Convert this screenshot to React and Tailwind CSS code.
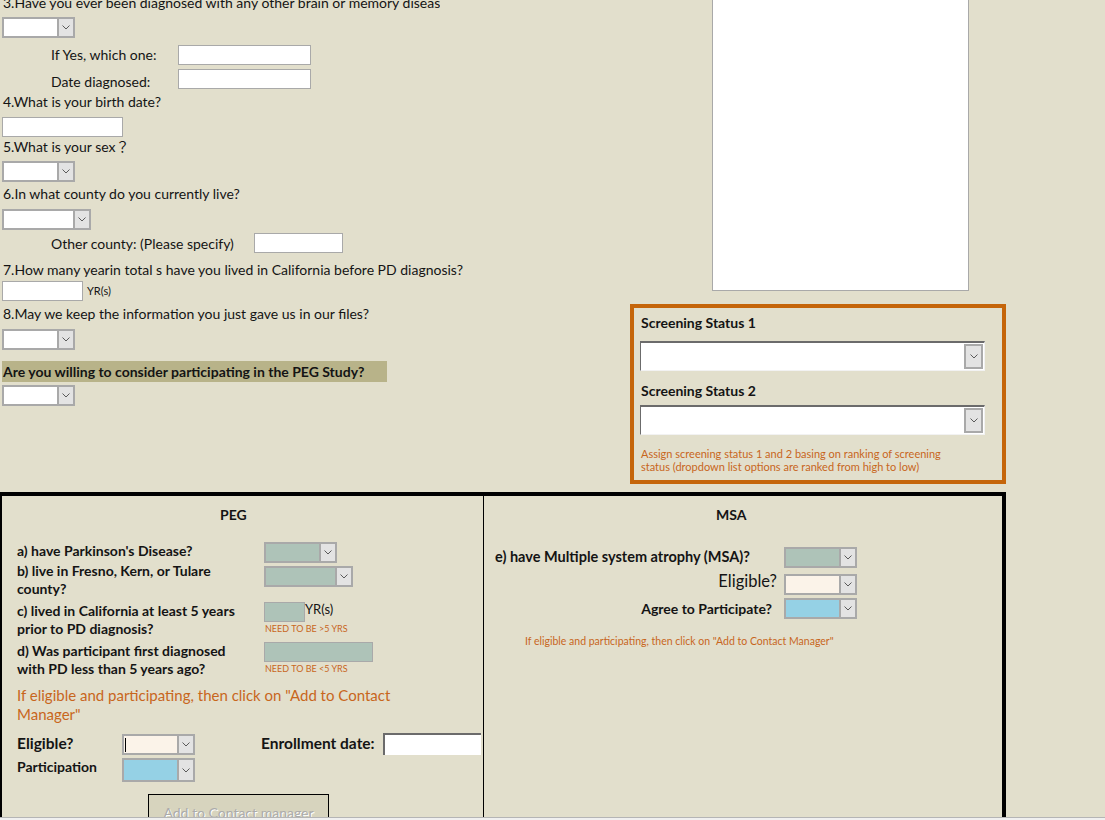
import React from "react";

const Chevron = () => (
  <svg width="8" height="5" viewBox="0 0 8 5" className="block">
    <polyline points="0.5,0.5 4,4 7.5,0.5" fill="none" stroke="#5a5a5a" strokeWidth="1" />
  </svg>
);

// small access-style combo box
const Combo = ({ className = "", bg = "bg-white", cursor = false }) => (
  <div className={`flex border-2 border-[#a9a9a9] ${className}`}>
    <div className={`flex-1 ${bg} relative`}>
      {cursor && <div className="absolute left-[1px] top-[2px] h-[14px] w-[1px] bg-black" />}
    </div>
    <div className="w-[16px] bg-[#e3e3e3] border-l-2 border-[#a9a9a9] flex items-center justify-center">
      <Chevron />
    </div>
  </div>
);

const BigCombo = () => (
  <div className="flex h-[30px] w-[345px] bg-white border-t-2 border-l border-[#6b6b6b] border-b border-r border-b-[#f2f2f2] border-r-[#f2f2f2]">
    <div className="flex-1" />
    <div className="w-[19px] my-[1px] mr-[1px] bg-[#e3e3e3] border-2 border-[#a9a9a9] flex items-center justify-center">
      <Chevron />
    </div>
  </div>
);

const TextBox = ({ className = "", bg = "bg-white" }) => (
  <div className={`${bg} border border-[#a9a9a9] ${className}`} />
);

export default function App() {
  return (
    <div className="h-[820px] w-[1105px] overflow-hidden bg-[#e2dfcc] font-['Lato','Noto_Sans_CJK_JP',sans-serif] text-[14px] text-[#141414] relative">
      <div className="flex">
        {/* questions */}
        <div className="w-[630px] shrink-0 pl-[2px]">
          <div className="-mt-[5px] h-[16px] leading-[16px] w-[438px] overflow-hidden whitespace-nowrap pl-[1px]">
            3.Have you ever been diagnosed with any other brain or memory disease?
          </div>
          <Combo className="mt-[6px] h-[21px] w-[73px]" />
          <div className="mt-[7px] flex items-center h-[20px]">
            <span className="w-[176px] pl-[49px] -mt-[1px]">If Yes, which one:</span>
            <TextBox className="h-[20px] w-[133px]" />
          </div>
          <div className="mt-[4px] flex items-start h-[20px]">
            <span className="w-[176px] pl-[49px] leading-[16px] pt-[5px]">Date diagnosed:</span>
            <TextBox className="h-[20px] w-[133px]" />
          </div>
          <div className="mt-[5px] h-[16px] leading-[16px] pl-[1px]">4.What is your birth date?</div>
          <TextBox className="mt-[7px] h-[20px] w-[121px]" />
          <div className="mt-[1px] h-[16px] leading-[16px] pl-[1px] whitespace-nowrap">
            5.What is your sex<span className="font-['Noto_Sans_CJK_JP',sans-serif] text-[14px] leading-[16px]">？</span>
          </div>
          <Combo className="mt-[7px] h-[21px] w-[73px]" />
          <div className="mt-[4px] h-[16px] leading-[16px] pl-[1px]">6.In what county do you currently live?</div>
          <Combo className="mt-[7px] h-[21px] w-[89px]" />
          <div className="mt-[3px] flex items-center h-[20px]">
            <span className="w-[252px] pl-[49px]">Other county: (Please specify)</span>
            <TextBox className="h-[20px] w-[89px]" />
          </div>
          <div className="mt-[9px] h-[16px] leading-[16px] pl-[1px]">
            7.How many yearin total s have you lived in California before PD diagnosis?
          </div>
          <div className="mt-[3px] flex items-center h-[20px]">
            <TextBox className="h-[20px] w-[81px]" />
            <span className="ml-[4px] text-[11px]">YR(s)</span>
          </div>
          <div className="mt-[5px] h-[16px] leading-[16px] pl-[1px]">
            8.May we keep the information you just gave us in our files?
          </div>
          <Combo className="mt-[7px] h-[21px] w-[73px]" />
          <div className="mt-[11px] h-[21px] w-[385px] bg-[#b8b389] font-bold leading-[21px] pl-[1px]">
            Are you willing to consider participating in the PEG Study?
          </div>
          <Combo className="mt-[3px] h-[21px] w-[73px]" />
        </div>

        {/* right column */}
        <div className="flex-1">
          <div className="ml-[82px] h-[291px] w-[257px] bg-white border-x border-b border-[#a9a9a9]" />
          <div className="mt-[13px] h-[180px] w-[376px] border-4 border-[#c5650a] pl-[6px] pt-[7px]">
            <div className="font-bold h-[16px] leading-[16px] pl-[1px]">Screening Status 1</div>
            <div className="mt-[10px]">
              <BigCombo />
            </div>
            <div className="mt-[12px] font-bold h-[16px] leading-[16px] pl-[1px]">Screening Status 2</div>
            <div className="mt-[6px]">
              <BigCombo />
            </div>
            <div className="mt-[12px] pl-[1px] text-[11px] leading-[13px] text-[#c8661c] w-[320px]">
              Assign screening status 1 and 2 basing on ranking of screening status (dropdown list options are ranked from high to low)
            </div>
          </div>
        </div>
      </div>

      {/* PEG / MSA */}
      <div className="mt-[8px] flex h-[325px] w-[1006px] border-t-4 border-l-2 border-r-4 border-black overflow-hidden">
        <div className="w-[482px] shrink-0 border-r border-black relative">
          <div className="mt-[11px] h-[16px] leading-[16px] font-bold pl-[218px]">PEG</div>

          <div className="mt-[19px] pl-[15px] font-bold leading-[18px]">
            <div className="flex h-[20px]">
              <div className="w-[247px]">a) have Parkinson's Disease?</div>
              <Combo className="h-[21px] w-[73px]" bg="bg-[#aec3b8]" />
            </div>
            <div className="flex h-[40px]">
              <div className="w-[247px]">
                b) live in Fresno, Kern, or Tulare
                <br />
                county?
              </div>
              <Combo className="mt-[4px] h-[21px] w-[89px]" bg="bg-[#aec3b8]" />
            </div>
            <div className="flex h-[40px]">
              <div className="w-[247px]">
                c) lived in California at least 5 years
                <br />
                prior to PD diagnosis?
              </div>
              <div>
                <div className="flex items-start">
                  <TextBox className="h-[20px] w-[41px]" bg="bg-[#aec3b8]" />
                  <span className="font-normal text-[13px] leading-[14px]">YR(s)</span>
                </div>
                <div className="pl-[1px] font-normal text-[9px] leading-[12px] mt-[1px] text-[#c8661c]">NEED TO BE &gt;5 YRS</div>
              </div>
            </div>
            <div className="flex h-[40px]">
              <div className="w-[247px]">
                d) Was participant first diagnosed
                <br />
                with PD less than 5 years ago?
              </div>
              <div>
                <TextBox className="h-[20px] w-[109px]" bg="bg-[#aec3b8]" />
                <div className="pl-[1px] font-normal text-[9px] leading-[12px] mt-[1px] text-[#c8661c]">NEED TO BE &lt;5 YRS</div>
              </div>
            </div>
          </div>

          <div className="mt-[4px] pl-[15px] w-[400px] text-[15px] leading-[19px] text-[#c8661c]">
            If eligible and participating, then click on "Add to Contact Manager"
          </div>

          <div className="mt-[9px] pl-[15px] flex items-center h-[22px] font-bold">
            <span className="w-[105px] text-[15.5px]">Eligible?</span>
            <Combo className="h-[21px] w-[73px]" bg="bg-[#fbf3e9]" cursor />
            <span className="ml-[66px] w-[122px] text-[15.5px]">Enrollment date:</span>
            <div className="h-[22px] w-[98px] bg-white border-t-2 border-l-2 border-[#6b6b6b]" />
          </div>
          <div className="mt-[3px] pl-[15px] flex items-start h-[24px] font-bold">
            <span className="w-[105px] leading-[18px]">Participation</span>
            <Combo className="h-[24px] w-[73px]" bg="bg-[#95d1e5]" />
          </div>

          <div className="mt-[12px] ml-[146px] h-[34px] w-[181px] bg-[#d7d4be] border border-black flex items-center justify-center pt-[2px]">
            <span className="text-[14px] text-[#ababab] [text-shadow:1px_1px_0_#ffffff]">Add to Contact manager</span>
          </div>
        </div>

        <div className="flex-1">
          <div className="mt-[11px] h-[16px] leading-[16px] font-bold pl-[232px]">MSA</div>
          <div className="mt-[24px] flex items-center h-[21px]">
            <span className="w-[300px] pl-[11px] font-bold text-[14.5px] -mt-[2px]">e) have Multiple system atrophy (MSA)?</span>
            <Combo className="h-[21px] w-[73px]" bg="bg-[#aec3b8]" />
          </div>
          <div className="mt-[6px] flex items-center h-[21px]">
            <span className="w-[293px] text-right text-[16.5px] -mt-[6px]">Eligible?</span>
            <Combo className="ml-[7px] h-[21px] w-[73px]" bg="bg-[#fbf3e9]" />
          </div>
          <div className="mt-[3px] flex items-center h-[21px]">
            <span className="w-[288px] text-right font-bold">Agree to Participate?</span>
            <Combo className="ml-[12px] h-[21px] w-[73px]" bg="bg-[#95d1e5]" />
          </div>
          <div className="mt-[16px] pl-[41px] text-[10.5px] leading-[12px] text-[#c8661c]">
            If eligible and participating, then click on "Add to Contact Manager"
          </div>
        </div>
      </div>

      <div className="h-[3px] border-t border-[#b5b5b5] bg-[#f0f0f0]" />
    </div>
  );
}
